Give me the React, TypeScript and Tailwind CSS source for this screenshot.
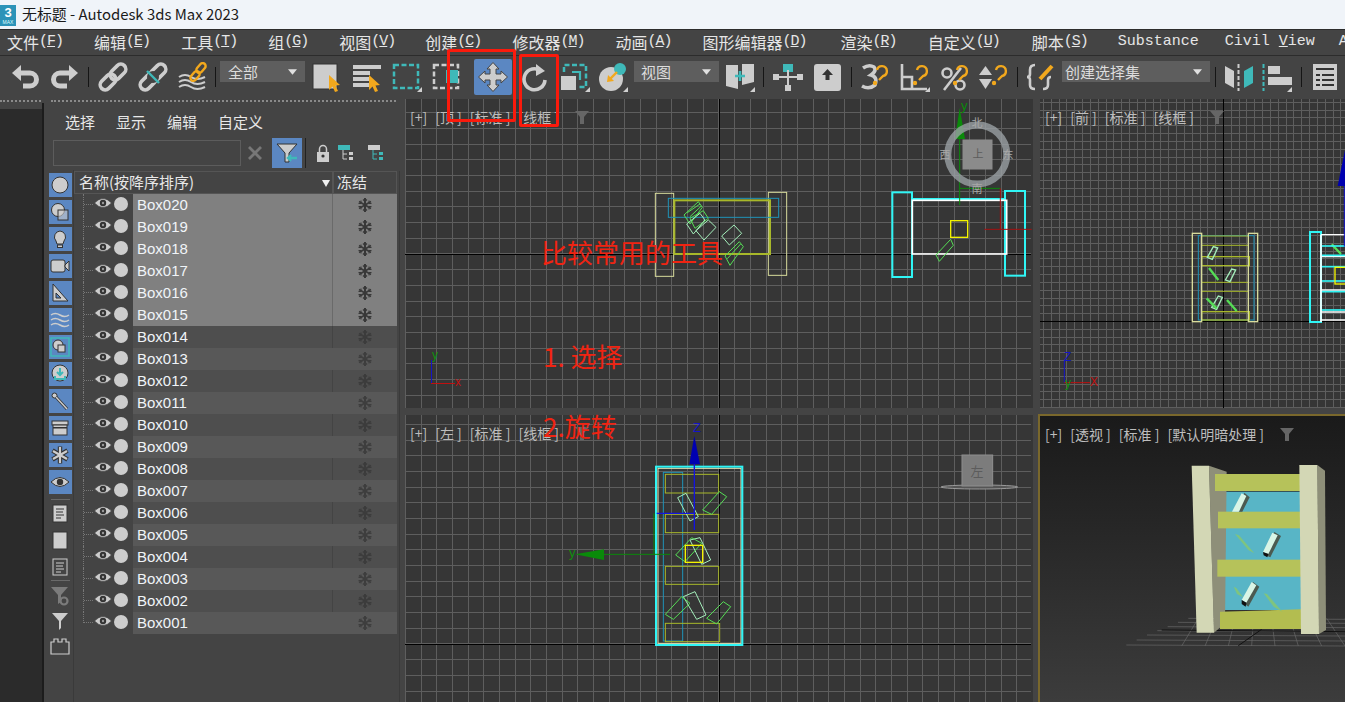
import type { ReactNode } from "react"

const G = "#cdcdcd"
const TEAL = "#3fb9b9"
const ORANGE = "#f2a81d"
const CJK = "font-['Noto_Sans_CJK_SC','Liberation_Sans',sans-serif]"

const menus = [
  ["文件", "F", ""],
  ["编辑", "E", ""],
  ["工具", "T", ""],
  ["组", "G", ""],
  ["视图", "V", ""],
  ["创建", "C", "-ml-px"],
  ["修改器", "M", ""],
  ["动画", "A", ""],
  ["图形编辑器", "D", ""],
  ["渲染", "R", "ml-[3px]"],
  ["自定义", "U", ""],
  ["脚本", "S", "ml-px"],
]

const boxes = Array.from({ length: 20 }, (_, i) => `Box${String(20 - i).padStart(3, "0")}`)

function Icon({ children, className = "" }: { children: ReactNode; className?: string }) {
  return (
    <svg viewBox="0 0 30 30" className={`w-[30px] h-[30px] shrink-0 ${className}`}>
      {children}
    </svg>
  )
}

function Sep({ className = "" }: { className?: string }) {
  return <div className={`w-px h-[20px] bg-[#151515] shrink-0 ${className}`} />
}

function Corner() {
  return <polygon points="30,25 30,30 25,30" fill="#d0d0d0" />
}

function Cursor({ x, y }: { x: number; y: number }) {
  return (
    <polygon
      transform={`translate(${x} ${y})`}
      points="0,0 11,10 6.5,10.5 9,16 6,17 3.5,11.5 0,15"
      fill={ORANGE}
    />
  )
}

function Dropdown({ label, className }: { label: string; className: string }) {
  return (
    <div className={`h-[21px] mb-[10px] bg-[#5e5e5e] flex items-center justify-between pr-2 shrink-0 ${className}`}>
      <span className={`text-[15px] leading-none text-[#dcdcdc] ${CJK}`}>{label}</span>
      <svg viewBox="0 0 10 6" className="w-[9px] h-[6px]">
        <polygon points="0,0 10,0 5,6" fill="#e0e0e0" />
      </svg>
    </div>
  )
}

function LinkGlyph({ broken = false }: { broken?: boolean }) {
  return (
    <>
      <g fill="none" stroke={G} strokeWidth="3.6">
        <rect x="-9" y="-5" width="18" height="10" rx="5" transform="translate(10 20) rotate(-45)" />
        <rect x="-9" y="-5" width="18" height="10" rx="5" transform="translate(20 10) rotate(-45)" />
      </g>
      {broken && (
        <>
          <circle cx="15" cy="15" r="6" fill="#444444" />
          <line x1="9" y1="9" x2="21" y2="21" stroke={TEAL} strokeWidth="2.4" />
        </>
      )}
    </>
  )
}

function QuestionHook() {
  return (
    <g fill="none" stroke={ORANGE} strokeWidth="2.4">
      <path d="M17 8 a5 5 0 1 1 6 6 l-4 4" />
      <circle cx="15" cy="21" r="1" fill={ORANGE} />
    </g>
  )
}

function Toolbar() {
  return (
    <div className="h-[42px] bg-[#444444] flex items-center pl-[10px] border-t border-[#2c2c2c] shrink-0">
      <Icon>
        <path d="M8 11 H20 a6.500 6.500 0 0 1 0 13 H13" fill="none" stroke={G} strokeWidth="5" />
        <polygon points="2,11 11,3 11,19" fill={G} />
      </Icon>
      <Icon className="ml-[10px]">
        <path d="M22 11 H10 a6.500 6.500 0 0 0 0 13 H17" fill="none" stroke={G} strokeWidth="5" />
        <polygon points="28,11 19,3 19,19" fill={G} />
      </Icon>
      <Sep className="ml-[8px]" />
      <Icon className="ml-[9px]">
        <LinkGlyph />
      </Icon>
      <Icon className="ml-[10px]">
        <LinkGlyph broken />
      </Icon>
      <Icon className="ml-[10px]">
        <g fill="none" stroke={G} strokeWidth="2">
          <path d="M1 15 q6 -4 12 0 t14 0" />
          <path d="M1 20 q6 -4 12 0 t14 0" />
          <path d="M1 25 q6 -4 12 0 t14 0" />
        </g>
        <g fill="none" stroke={ORANGE} strokeWidth="2.4">
          <rect x="-5.500" y="-3" width="11" height="6" rx="3" transform="translate(17 14) rotate(-50)" />
          <rect x="-5.500" y="-3" width="11" height="6" rx="3" transform="translate(23 6) rotate(-50)" />
        </g>
      </Icon>
      <Sep className="ml-[7px]" />
      <Dropdown label="全部" className="w-[85px] ml-[4px] pl-2" />
      <Icon className="ml-[7px]">
        <rect x="1" y="2" width="24" height="25" fill={G} stroke="#333333" />
        <Cursor x={17} y={13} />
      </Icon>
      <Icon className="ml-[10px]">
        <g fill={G}>
          <rect x="1" y="3" width="28" height="4" />
          <rect x="1" y="9" width="17" height="4" />
          <rect x="1" y="15" width="17" height="4" />
          <rect x="1" y="21" width="17" height="4" />
        </g>
        <Cursor x={17} y={13} />
      </Icon>
      <Icon className="ml-[10px]">
        <rect x="2" y="3" width="24" height="23" fill="none" stroke={TEAL} strokeWidth="2.500" strokeDasharray="5 2.500" />
        <polygon points="30,25 30,30 25,30" fill="#d0d0d0" />
      </Icon>
      <Icon className="ml-[10px]">
        <rect x="2" y="3" width="24" height="23" fill="none" stroke={G} strokeWidth="2.500" strokeDasharray="5 2.500" />
        <rect x="14" y="8" width="12" height="13" fill={TEAL} />
      </Icon>
      <div className="ml-[12px] w-[38px] h-[36px] rounded-[2px] bg-[#5b87c2] flex items-center justify-center shrink-0">
        <Icon>
          <g fill={G} stroke="#444444" strokeWidth="1">
            <path d="M15 0.500 L21 7 H18 V12 H23 V9 L29.500 15 L23 21 V18 H18 V23 H21 L15 29.500 L9 23 H12 V18 H7 V21 L0.500 15 L7 9 V12 H12 V7 H9 Z" />
          </g>
        </Icon>
      </div>
      <Icon className="ml-[8px]">
        <path d="M21 9 A10.500 10.500 0 1 0 25 18" fill="none" stroke={G} strokeWidth="3.600" />
        <polygon points="16,2 25,9 16,14" fill={G} />
      </Icon>
      <Icon className="ml-[10px]">
        <rect x="1" y="14" width="15" height="14" fill={G} />
        <path d="M4 10 V3 H26 V25 H18" fill="none" stroke={TEAL} strokeWidth="2.500" strokeDasharray="5 2.500" />
        <path d="M12 10 H20 V18" fill="none" stroke={TEAL} strokeWidth="2.200" />
        <Corner />
      </Icon>
      <Icon className="ml-[8px]">
        <circle cx="13" cy="17" r="12" fill={G} />
        <circle cx="22" cy="7" r="6" fill={TEAL} />
        <line x1="19" y1="10" x2="11" y2="18" stroke={ORANGE} strokeWidth="2.400" />
        <polygon points="9,20 10,13 16,19" fill={ORANGE} />
        <Corner />
      </Icon>
      <Dropdown label="视图" className="w-[85px] ml-[6px] pl-[7px]" />
      <Icon className="ml-[6px]">
        <polygon points="1,3 13,3 13,27 1,24" fill={G} />
        <polygon points="17,2 29,2 29,20 17,23" fill={G} />
        <path d="M15 9 V19 M10 14 H20" stroke={TEAL} strokeWidth="2.600" />
        <Corner />
      </Icon>
      <Sep className="ml-[8px]" />
      <Icon className="ml-[9px]">
        <rect x="14" y="14" width="2" height="14" fill={G} />
        <rect x="4" y="14" width="22" height="2" fill={G} />
        <rect x="10" y="2" width="10" height="8" fill={TEAL} />
        <rect x="14" y="8" width="2" height="8" fill={G} />
        <rect x="0" y="12" width="6" height="6" fill={G} />
        <rect x="24" y="12" width="6" height="6" fill={G} />
        <rect x="12" y="23" width="6" height="6" fill={G} />
      </Icon>
      <Icon className="ml-[10px]">
        <rect x="1" y="2" width="27" height="27" rx="3" fill={G} />
        <polygon points="14.500,7 20,13 16.500,13 16.500,18 12.500,18 12.500,13 9,13" fill="#333333" />
      </Icon>
      <Sep className="ml-[8px]" />
      <Icon className="ml-[8px]">
        <path d="M3 6 Q9 2 14 5 Q17 9 11 13 Q18 15 15 23 Q9 28 2 24" fill="none" stroke={G} strokeWidth="3.600" />
        <QuestionHook />
      </Icon>
      <Icon className="ml-[10px]">
        <path d="M2 2 V27 H27 M2 27 V15 H12 V27" fill="none" stroke={G} strokeWidth="2.600" />
        <QuestionHook />
        <Corner />
      </Icon>
      <Icon className="ml-[10px]">
        <line x1="4" y1="28" x2="21" y2="6" stroke={G} strokeWidth="2.600" />
        <circle cx="7" cy="11" r="4.500" fill="none" stroke={G} strokeWidth="2.600" />
        <circle cx="20" cy="23" r="4.500" fill="none" stroke={G} strokeWidth="2.600" />
        <QuestionHook />
      </Icon>
      <Icon className="ml-[9px]">
        <polygon points="0,13 13,13 6.500,4" fill={G} />
        <polygon points="0,17 13,17 6.500,27" fill={G} />
        <QuestionHook />
      </Icon>
      <Sep className="ml-[8px]" />
      <Icon className="ml-[8px]">
        <path d="M9 3 Q4 3 4 8 V12 Q4 15 1 15 Q4 15 4 18 V23 Q4 27 9 27" fill="none" stroke={G} strokeWidth="2.600" />
        <path d="M17 27 Q22 27 22 23 V18 Q22 15 25 15" fill="none" stroke={G} strokeWidth="2.600" />
        <line x1="14" y1="17" x2="26" y2="4" stroke={ORANGE} strokeWidth="4" />
      </Icon>
      <Dropdown label="创建选择集" className="w-[148px] ml-[6px] pl-[3px]" />
      <Sep className="ml-[5px]" />
      <Icon className="ml-[8px]">
        <polygon points="1,4 10,9 10,26 1,21" fill={G} />
        <line x1="14.500" y1="2" x2="14.500" y2="29" stroke={G} strokeWidth="2" strokeDasharray="4 2" />
        <polygon points="29,4 20,9 20,26 29,21" fill={TEAL} />
      </Icon>
      <Icon className="ml-[8px]">
        <line x1="1.500" y1="2" x2="1.500" y2="29" stroke={TEAL} strokeWidth="2" strokeDasharray="4 2" />
        <rect x="6" y="4" width="12" height="8" fill={G} />
        <rect x="6" y="15" width="24" height="8" fill={G} />
        <Corner />
      </Icon>
      <Sep className="ml-[9px]" />
      <Icon className="ml-[8px]">
        <rect x="3" y="2" width="24" height="26" fill={G} />
        <g fill="#333333">
          <rect x="6" y="6" width="18" height="2" />
          <rect x="6" y="12" width="4" height="2" />
          <rect x="12" y="12" width="12" height="2" />
          <rect x="6" y="17" width="4" height="2" />
          <rect x="12" y="17" width="12" height="2" />
          <rect x="6" y="22" width="4" height="2" />
          <rect x="12" y="22" width="12" height="2" />
        </g>
      </Icon>
    </div>
  )
}

function SideIcon({ children }: { children: ReactNode }) {
  return (
    <div className="w-[23px] h-[24px] bg-[#5b87c2] flex items-center justify-center">
      <svg viewBox="0 0 20 20" className="w-[20px] h-[20px]">
        {children}
      </svg>
    </div>
  )
}

function PlainIcon({ children }: { children: ReactNode }) {
  return (
    <svg viewBox="0 0 20 20" className="w-[20px] h-[20px]">
      {children}
    </svg>
  )
}

const ic = { fill: G, stroke: "#333333", strokeWidth: 1 }

function SideColumn() {
  return (
    <div className="w-[30px] shrink-0 border-r border-[#3a3a3a] flex flex-col items-center pt-[3px] pl-[3px]">
      <div className="flex flex-col gap-[3px] w-[23px]">
        <SideIcon><circle cx="10" cy="10" r="8" {...ic} /></SideIcon>
        <SideIcon>
          <circle cx="8" cy="8" r="6.500" {...ic} />
          <rect x="8" y="8" width="10" height="10" fill={G} fillOpacity="0.6" stroke="#333333" />
        </SideIcon>
        <SideIcon>
          <path d="M10 2 a6 6 0 0 1 4 10 l-1 3 H7 l-1 -3 a6 6 0 0 1 4 -10 Z" {...ic} />
          <rect x="7.500" y="16" width="5" height="2.500" {...ic} />
        </SideIcon>
        <SideIcon>
          <rect x="1" y="4" width="14" height="12" rx="2" {...ic} />
          <polygon points="15,9 19,5 19,15 15,11" {...ic} />
        </SideIcon>
        <SideIcon>
          <polygon points="3,1 18,18 3,18" {...ic} />
          <polygon points="6,10 11,15 6,15" fill="#5b87c2" stroke="#333333" />
        </SideIcon>
        <SideIcon>
          <g fill="none" stroke={G} strokeWidth="1.500">
            <path d="M1 5 q4 -3 9 0 t9 0" />
            <path d="M1 10 q4 -3 9 0 t9 0" />
            <path d="M1 15 q4 -3 9 0 t9 0" />
          </g>
        </SideIcon>
        <SideIcon>
          <rect x="1" y="1" width="18" height="18" fill="none" stroke={TEAL} strokeWidth="1.500" />
          <circle cx="8" cy="8" r="5" {...ic} />
          <rect x="8" y="8" width="7" height="7" {...ic} />
        </SideIcon>
        <SideIcon>
          <circle cx="10" cy="9" r="8" {...ic} />
          <path d="M10 4 V10 M7 8 L10 11 L13 8" fill="none" stroke={TEAL} strokeWidth="2" />
          <path d="M5 12 V15 H15 V12" fill="none" stroke={TEAL} strokeWidth="2" />
        </SideIcon>
        <SideIcon>
          <circle cx="4.500" cy="4.500" r="2.500" {...ic} />
          <line x1="6" y1="6" x2="17" y2="18" stroke="#333333" strokeWidth="3" />
          <line x1="6" y1="6" x2="17" y2="18" stroke={G} strokeWidth="1.500" />
        </SideIcon>
        <SideIcon>
          <rect x="2" y="3" width="16" height="4" {...ic} />
          <rect x="3" y="7" width="14" height="10" {...ic} />
          <rect x="3" y="9" width="14" height="1.500" fill="#333333" />
        </SideIcon>
        <SideIcon>
          <g stroke="#333333" strokeWidth="4.400">
            <line x1="10" y1="1.500" x2="10" y2="18.500" />
            <line x1="2.500" y1="5.500" x2="17.500" y2="14.500" />
            <line x1="2.500" y1="14.500" x2="17.500" y2="5.500" />
          </g>
          <g stroke={G} strokeWidth="2.200">
            <line x1="10" y1="2" x2="10" y2="18" />
            <line x1="3" y1="6" x2="17" y2="14" />
            <line x1="3" y1="14" x2="17" y2="6" />
          </g>
        </SideIcon>
        <SideIcon>
          <path d="M1 10 Q10 1 19 10 Q10 19 1 10 Z" {...ic} />
          <circle cx="10" cy="10" r="3.200" fill="#333333" />
        </SideIcon>
      </div>
      <div className="w-[19px] h-px bg-[#6a6a6a] mt-[5px]" />
      <div className="flex flex-col items-center gap-[7px] mt-[4px]">
        <PlainIcon>
          <rect x="3" y="1" width="14" height="17" {...ic} />
          <path d="M6 5 H14 M6 8 H13 M6 11 H14 M6 14 H11" stroke="#333333" />
        </PlainIcon>
        <PlainIcon><rect x="3" y="1" width="14" height="17" {...ic} /></PlainIcon>
        <PlainIcon>
          <rect x="3" y="1" width="14" height="16" fill="#444444" stroke={G} />
          <path d="M6 5 H14 M6 8 H13 M6 11 H14 M6 14 H11" stroke={G} />
        </PlainIcon>
      </div>
      <div className="w-[19px] h-px bg-[#6a6a6a] mt-[2px]" />
      <div className="flex flex-col items-center gap-[5px] mt-[5px]">
        <PlainIcon>
          <polygon points="1,1 18,1 11,9 11,16 8,18 8,9" fill="#7b7b7b" />
          <circle cx="14" cy="15" r="3.500" fill="none" stroke="#7b7b7b" strokeWidth="2.200" />
        </PlainIcon>
        <PlainIcon>
          <polygon points="2,2 18,2 11,10 11,17 9,19 9,10" fill={G} />
        </PlainIcon>
        <PlainIcon>
          <path d="M1 6 H4 V3 H8 V6 H12 V3 H16 V6 H19 V18 H1 Z" fill="none" stroke={G} strokeWidth="1.200" />
        </PlainIcon>
      </div>
    </div>
  )
}

function FreezeFlake({ dim }: { dim: boolean }) {
  return (
    <svg viewBox="0 0 14 14" className={`w-[14px] h-[14px] ${dim ? "opacity-80" : ""}`}>
      <g stroke="#383838" fill="none">
        <line x1="7" y1="0" x2="7" y2="14" strokeWidth="2" />
        <line x1="1" y1="3.500" x2="13" y2="10.500" strokeWidth="1.500" />
        <line x1="1" y1="10.500" x2="13" y2="3.500" strokeWidth="1.500" />
        <path d="M5 1.500 L7 3.500 L9 1.500 M5 12.500 L7 10.500 L9 12.500" strokeWidth="1.200" />
        <path d="M0.500 5.500 H3 V2.500 M13.500 5.500 H11 V2.500 M0.500 8.500 H3 V11.500 M13.500 8.500 H11 V11.500" strokeWidth="1" />
      </g>
    </svg>
  )
}

function BoxRow({ name, index }: { name: string; index: number }) {
  const selected = index < 6
  const odd = index % 2 === 1
  const bg = selected ? "bg-[#808080]" : odd ? "bg-[#585858]" : "bg-[#4e4e4e]"
  const last = index === boxes.length - 1
  return (
    <div className="flex h-[22px]">
      <div className="w-[59px] flex shrink-0 pl-[9px]">
        <div className={`w-[10px] border-l border-dotted border-[#777777] ${last ? "h-[11px]" : "h-full"}`}>
          <div className="h-[11px] border-b border-dotted border-[#777777]" />
        </div>
        <svg viewBox="0 0 18 12" className="w-[18px] h-[12px] ml-px mt-[3px]">
          <path d="M0.500 6 Q9 -3 17.500 6 Q9 15 0.500 6 Z" fill={G} stroke="#333333" strokeWidth="0.600" />
          <circle cx="9" cy="6" r="3.200" fill="#333333" />
          <circle cx="9" cy="6" r="1.200" fill="#999999" />
        </svg>
        <div className="w-[14px] h-[14px] rounded-full bg-[#cdcdcd] ml-[2px] mt-[3px]" />
      </div>
      <div className={`flex-1 flex ${bg}`}>
        <div className={`flex-1 flex items-center pl-[4px] text-[15px] text-[#f0f4f8] font-['Liberation_Sans',sans-serif] ${!odd && !selected ? "border-r border-[#444444]" : ""} ${selected ? "border-r border-[#6a6a6a]" : ""}`}>
          {name}
        </div>
        <div className="w-[64px] flex items-center justify-center">
          <FreezeFlake dim={!selected} />
        </div>
      </div>
    </div>
  )
}

function Explorer() {
  return (
    <div className="flex-1 flex flex-col bg-[#444444] border-l-2 border-[#1c1c1c]">
      <div className={`flex gap-[21px] pl-[21px] mt-[9px] text-[15px] leading-[20px] text-[#e8e8e8] ${CJK}`}>
        <span>选择</span>
        <span>显示</span>
        <span>编辑</span>
        <span>自定义</span>
      </div>
      <div className="flex items-center pl-[9px] mt-[6px] h-[30px]">
        <div className="w-[188px] h-[26px] border border-[#5c5c5c]" />
        <svg viewBox="0 0 14 14" className="w-[14px] h-[14px] ml-[7px]">
          <path d="M1 1 L13 13 M13 1 L1 13" stroke="#777777" strokeWidth="2.800" />
        </svg>
        <div className="w-[30px] h-[30px] bg-[#5b87c2] ml-[10px] flex items-center justify-center">
          <svg viewBox="0 0 24 24" className="w-[24px] h-[24px]">
            <polygon points="2,3 22,3 14,12 14,21 10,21 10,12" fill={G} stroke="#333333" />
            <path d="M22 17 H13 M16 14 L13 17 L16 20" fill="none" stroke={TEAL} strokeWidth="2.400" />
          </svg>
        </div>
        <div className="w-px h-[30px] bg-[#222222] ml-[3px]" />
        <svg viewBox="0 0 14 20" className="w-[14px] h-[20px] ml-[10px]">
          <path d="M3.500 9 V6 a3.500 3.500 0 0 1 7 0 V9" fill="none" stroke={G} strokeWidth="1.500" />
          <rect x="1" y="9" width="12" height="10" fill={G} />
          <circle cx="7" cy="13" r="1.600" fill="#333333" />
        </svg>
        <svg viewBox="0 0 18 18" className="w-[18px] h-[18px] ml-[8px]">
          <rect x="0" y="1" width="12" height="5" fill={TEAL} />
          <path d="M5 6 V15 H9 M5 10 H9" fill="none" stroke={G} />
          <rect x="11" y="8" width="4" height="3" fill={G} />
          <rect x="11" y="13" width="4" height="3" fill={G} />
        </svg>
        <svg viewBox="0 0 18 18" className="w-[18px] h-[18px] ml-[12px]">
          <rect x="0" y="1" width="12" height="5" fill={G} />
          <path d="M5 6 V15 H9 M5 10 H9" fill="none" stroke={TEAL} />
          <rect x="11" y="8" width="4" height="3" fill={TEAL} />
          <rect x="11" y="13" width="4" height="3" fill={TEAL} />
        </svg>
      </div>
      <div className="flex-1 flex mt-[2px] min-h-0">
        <SideColumn />
        <div className="flex-1 flex flex-col pr-[2px] mt-[1px] border-r border-[#3a3a3a]">
          <div className={`h-[23px] flex text-[15px] text-[#e8e8e8] ${CJK}`}>
            <div className="flex-1 border border-[#555555] flex items-center justify-between pl-[4px] pr-[2px]">
              <span>名称(按降序排序)</span>
              <svg viewBox="0 0 8 8" className="w-[8px] h-[8px]">
                <polygon points="0,1 8,1 4,8" fill="#f0f0f0" />
              </svg>
            </div>
            <div className="w-[64px] border border-[#555555] flex items-center pl-[3px]">冻结</div>
          </div>
          {boxes.map((b, i) => (
            <BoxRow key={b} name={b} index={i} />
          ))}
        </div>
      </div>
    </div>
  )
}

function ViewLabel({ items }: { items: string[] }) {
  return (
    <div className={`absolute top-[10px] left-[5px] flex items-center gap-[8px] text-[14px] leading-[16px] text-[#bdbdbd] ${CJK}`}>
      {items.map((t) => (
        <span key={t}>{t}</span>
      ))}
      <svg viewBox="0 0 16 16" className="w-[16px] h-[16px] ml-[7px]">
        <polygon points="1,2 15,2 10,8 10,15 6,15 6,8" fill="#666666" />
      </svg>
    </div>
  )
}

function GridLines({
  x0, y0, w, h, pitch, ax, ay,
}: { x0: number; y0: number; w: number; h: number; pitch: number; ax: number; ay: number }) {
  const xs: number[] = []
  const ys: number[] = []
  for (let v = ax - Math.floor((ax - x0) / pitch) * pitch; v < x0 + w; v += pitch) xs.push(Math.round(v) + 0.5)
  for (let v = ay - Math.floor((ay - y0) / pitch) * pitch; v < y0 + h; v += pitch) ys.push(Math.round(v) + 0.5)
  return (
    <g shapeRendering="crispEdges">
      {xs.map((v) => <line key={`x${v}`} x1={v} x2={v} y1={y0} y2={y0 + h} stroke="#5e5e5e" />)}
      {ys.map((v) => <line key={`y${v}`} y1={v} y2={v} x1={x0} x2={x0 + w} stroke="#5e5e5e" />)}
      <line x1={Math.round(ax) + 0.5} x2={Math.round(ax) + 0.5} y1={y0} y2={y0 + h} stroke="#000000" />
      <line y1={Math.round(ay) + 0.5} y2={Math.round(ay) + 0.5} x1={x0} x2={x0 + w} stroke="#000000" />
    </g>
  )
}

function TopView() {
  return (
    <svg viewBox="405 99 628 309" className="w-full h-full block">
      <GridLines x0={405} y0={99} w={626} h={309} pitch={15.67} ax={718.5} ay={253.5} />
      <polygon points="959.700,108 955,139 965,139" fill="#0a8a0a" />
      <g transform="translate(640 100) scale(0.33333)" fill="none" strokeWidth="3">
        <rect x="46" y="280" width="55" height="249" stroke="#d8dc9c" />
        <rect x="385" y="277" width="55" height="249" stroke="#d8dc9c" />
        <rect x="103" y="301" width="287" height="161" stroke="#a8b82a" strokeWidth="6" />
        <rect x="85" y="295" width="331" height="57" stroke="#1f93b8" />
        <g stroke="#55dd55">
          <path d="M132 345 L175 305 L187 322 L150 372 Z" />
          <path d="M142 338 L180 312 M150 350 L184 318" />
          <path d="M255 468 L298 425 L310 440 L270 496 Z" />
          <path d="M262 476 L302 432" />
          <path d="M150 355 L190 332 L205 355 L165 385 Z" />
        </g>
        <g stroke="#a5f0bc">
          <path d="M140 372 L180 340 L195 360 L160 402 Z" />
          <path d="M168 392 L205 360 L228 382 L192 420 Z" />
          <path d="M245 408 L282 375 L305 400 L268 435 Z" />
        </g>
        <rect x="757" y="277" width="59" height="254" stroke="#2ff5f5" strokeWidth="6" />
        <rect x="1095" y="273" width="60" height="254" stroke="#2ff5f5" strokeWidth="6" />
        <line x1="816" y1="297" x2="1095" y2="297" stroke="#2ff5f5" strokeWidth="6" />
        <rect x="817" y="301" width="283" height="161" stroke="#ffffff" strokeWidth="5" />
        <rect x="932" y="362" width="51" height="50" stroke="#f4f400" strokeWidth="4" />
        <path d="M888 465 L932 418 L940 436 L898 484 Z" stroke="#55dd55" />
        <line x1="959" y1="115" x2="959" y2="315" stroke="#0a8a0a" />
        <line x1="959" y1="265" x2="1081" y2="265" stroke="#0a8a0a" />
        <line x1="1081" y1="265" x2="1081" y2="388" stroke="#a51010" />
        <line x1="1033" y1="388" x2="1175" y2="388" stroke="#a51010" />
      </g>
      <text x="961" y="110" fontSize="13" fill="#0a8a0a" fontFamily="Liberation Sans">y</text>
      <circle cx="977.300" cy="154.500" r="29.500" fill="none" stroke="#9aa0a4" strokeOpacity="0.8" strokeWidth="7" />
      <rect x="962.500" y="139.500" width="30" height="30" fill="#8b8b8b" />
      <g fontFamily="Noto Sans CJK SC" fontSize="11" fill="#a8a8a8" textAnchor="middle">
        <text x="978" y="158" fill="#5c5c5c">上</text>
        <text x="977" y="127">北</text>
        <text x="977" y="193">南</text>
        <text x="945" y="159">西</text>
        <text x="1008" y="159">东</text>
      </g>
      <g strokeWidth="1" shapeRendering="crispEdges">
        <line x1="431.500" y1="360" x2="431.500" y2="384" stroke="#1414c8" />
        <line x1="431" y1="383.500" x2="455" y2="383.500" stroke="#c01010" />
      </g>
      <g fontFamily="Liberation Sans" fontSize="12">
        <text x="432" y="359" fill="#0f8f0f">y</text>
        <text x="455" y="386" fill="#c01010">x</text>
      </g>
    </svg>
  )
}

function FrontView() {
  return (
    <svg viewBox="1040 99 305 309" className="w-full h-full block">
      <GridLines x0={1040} y0={99} w={305} h={309} pitch={7.83} ax={1223} ay={321} />
      <g transform="translate(1035 100) scale(0.33333)" fill="none" strokeWidth="3">
        <rect x="490" y="407" width="167" height="253" stroke="#1f93b8" />
        <path d="M500 408 H640 M500 436 H640 M500 547 H640 M500 574 H640" stroke="#a8b82a" />
        <rect x="500" y="470" width="143" height="27" stroke="#a8b82a" strokeWidth="4" />
        <rect x="500" y="635" width="143" height="25" stroke="#a8b82a" strokeWidth="4" />
        <rect x="472" y="400" width="28" height="265" stroke="#d8dc9c" strokeWidth="4" />
        <rect x="640" y="400" width="28" height="265" stroke="#d8dc9c" strokeWidth="4" />
        <g stroke="#a5f0bc" strokeWidth="4">
          <path d="M517 472 L535 440 L548 444 L532 478 Z" />
          <path d="M571 540 L590 507 L602 510 L585 545 Z" />
          <path d="M530 622 L550 588 L562 592 L545 628 Z" />
        </g>
        <g stroke="#55dd55" strokeWidth="7">
          <line x1="522" y1="504" x2="550" y2="540" />
          <line x1="515" y1="595" x2="545" y2="625" />
          <line x1="576" y1="600" x2="605" y2="633" />
          <line x1="890" y1="433" x2="918" y2="462" />
        </g>
        <rect x="825" y="396" width="33" height="270" stroke="#2ff5f5" strokeWidth="6" />
        <path d="M858 404 H930 M858 636 H930 M858 660 H930 M858 470 H930 M858 570 H930" stroke="#ffffff" strokeWidth="4" />
        <rect x="858" y="438" width="80" height="28" stroke="#2ff5f5" strokeWidth="5" />
        <rect x="858" y="500" width="80" height="43" stroke="#2ff5f5" strokeWidth="5" />
        <rect x="858" y="575" width="80" height="55" stroke="#2ff5f5" strokeWidth="5" />
        <line x1="858" y1="404" x2="858" y2="666" stroke="#ffffff" strokeWidth="5" />
        <rect x="900" y="502" width="40" height="50" stroke="#f4f400" strokeWidth="4" />
        <line x1="928" y1="258" x2="928" y2="440" stroke="#1414c8" />
        <polygon points="930,150 908,258 935,258" fill="#0000b0" />
        <line x1="88" y1="780" x2="88" y2="848" stroke="#1414c8" />
        <line x1="88" y1="848" x2="165" y2="848" stroke="#c01010" />
      </g>
      <g fontFamily="Liberation Sans" fontSize="12">
        <text x="1064" y="361" fill="#1414c8">Z</text>
        <text x="1065" y="387" fill="#0f8f0f">y</text>
        <text x="1090" y="386" fill="#c01010">X</text>
      </g>
    </svg>
  )
}

function LeftView() {
  return (
    <svg viewBox="405 415 628 287" className="w-full h-full block">
      <GridLines x0={405} y0={415} w={626} h={287} pitch={15.67} ax={718.5} ay={643.5} />
      <g transform="translate(560 415) scale(0.33333)" fill="none" strokeWidth="3">
        <rect x="310" y="172" width="58" height="506" stroke="#1f93b8" />
        <g stroke="#a8b82a">
          <rect x="316" y="178" width="160" height="56" />
          <rect x="316" y="298" width="160" height="55" />
          <rect x="316" y="454" width="160" height="54" />
          <rect x="316" y="625" width="163" height="55" />
        </g>
        <g stroke="#a5f0bc">
          <path d="M353 248 L378 235 L415 305 L390 318 Z" />
          <path d="M390 375 L420 368 L452 435 L425 448 Z" />
          <path d="M370 545 L405 530 L438 600 L410 613 Z" />
        </g>
        <g stroke="#55dd55">
          <path d="M428 285 L478 230 L500 245 L455 298 Z" />
          <path d="M347 420 L395 368 L425 385 L375 440 Z" />
          <path d="M316 598 L365 545 L390 565 L340 613 Z" />
          <path d="M440 610 L490 560 L512 575 L470 627 Z" />
        </g>
        <rect x="294" y="160" width="249" height="525" stroke="#e6e8b8" strokeWidth="3" />
        <rect x="288" y="155" width="259" height="535" stroke="#2ff5f5" strokeWidth="6" />
        <rect x="376" y="391" width="52" height="51" stroke="#f4f400" strokeWidth="4" />
        <line x1="403" y1="140" x2="403" y2="345" stroke="#1414e0" strokeWidth="4" />
        <line x1="290" y1="295" x2="403" y2="295" stroke="#1414e0" strokeWidth="4" />
        <line x1="130" y1="418" x2="330" y2="418" stroke="#0a8a0a" />
        <line x1="282" y1="295" x2="282" y2="418" stroke="#0a8a0a" />
        <polygon points="403,62 388,148 420,148" fill="#0000b0" />
        <polygon points="45,418 132,403 132,435" fill="#0a8a0a" />
        <ellipse cx="1258" cy="216" rx="115" ry="6" fill="#555555" stroke="#9a9a9a" />
        <rect x="1206" y="120" width="92" height="93" fill="#7c7c7c" stroke="#8f8f8f" />
      </g>
      <g fontFamily="Liberation Sans" fontSize="13">
        <text x="693" y="432" fill="#1414c8">Z</text>
        <text x="569" y="557" fill="#0f8f0f">y</text>
      </g>
      <text x="977" y="476" fontFamily="Noto Sans CJK SC" fontSize="13" fill="#5c5c5c" textAnchor="middle">左</text>
    </svg>
  )
}

function PerspView() {
  return (
    <svg viewBox="15 18 915 858" preserveAspectRatio="xMinYMin meet" className="w-full h-full block">
      <g stroke="#6a6a6a" strokeWidth="2">
        {[625, 637, 650, 662, 675, 690, 705].map((y, i) => (
          <line key={y} x1={460 - i * 31} y1={y} x2="930" y2={y + 3} />
        ))}
        {[-2, -1, 0, 1, 2, 3, 4, 5, 6, 7, 8].map((k) => (
          <line key={k} x1={600 + k * 55} y1="625" x2={600 + k * 70 - 20} y2="708" />
        ))}
      </g>
      <line x1="610" y1="707" x2="680" y2="658" stroke="#111111" strokeWidth="3" />
      <line x1="380" y1="660" x2="930" y2="665" stroke="#111111" strokeWidth="3" />
      <rect x="562" y="245" width="236" height="355" fill="#58b5c6" />
      <polygon points="522,167 575,185 570,640 537,668" fill="#8e8f79" />
      <rect x="540" y="192" width="255" height="51" fill="#b6c25a" />
      <rect x="549" y="305" width="247" height="50" fill="#b6c25a" />
      <rect x="547" y="449" width="251" height="51" fill="#b6c25a" />
      <polygon points="555,605 798,598 798,657 555,657" fill="#b3bd50" />
      <polygon points="470,167 522,167 537,668 485,668" fill="#d3d7b5" />
      <polygon points="847,165 870,182 873,660 852,672" fill="#8e8f79" />
      <polygon points="793,165 847,165 852,672 798,672" fill="#d3d7b5" />
      <polygon points="628,248 644,262 622,305 610,305" fill="#4b5a50" />
      <polygon points="620,250 634,258 612,305 591,305" fill="#d9f5e6" />
      <polygon points="718,366 738,378 706,442 692,436" fill="#4b5a50" />
      <polygon points="712,368 728,376 700,432 684,426" fill="#d9f5e6" />
      <polygon points="684,426 700,432 697,442 686,436" fill="#111111" />
      <polygon points="654,516 673,530 640,590 630,582" fill="#4b5a50" />
      <polygon points="650,516 664,526 634,578 620,570" fill="#d9f5e6" />
      <polygon points="620,570 634,578 632,590 620,582" fill="#111111" />
      <polygon points="600,372 612,376 658,430 640,420" fill="#7fc47f" />
      <polygon points="596,530 604,534 624,562 606,552" fill="#7fc47f" />
      <polygon points="686,550 696,552 742,605 716,590" fill="#7fc47f" />
    </svg>
  )
}

export default function App() {
  return (
    <div className={`relative w-[1345px] h-[702px] overflow-hidden bg-[#444444] flex flex-col ${CJK}`}>
      {/* title bar */}
      <div className="h-[29px] bg-[#f0f4f9] flex items-center shrink-0">
        <div className="w-[16px] h-[21px] ml-0 mt-[1px] bg-[#2c93b8] flex flex-col items-center justify-start">
          <span className="text-[13px] leading-[15px] font-bold text-white font-['Liberation_Sans',sans-serif]">3</span>
          <span className="text-[5px] leading-[5px] text-[#ddffff] font-['Liberation_Sans',sans-serif]">MAX</span>
        </div>
        <span className="ml-[6px] text-[14.9px] text-[#1a1a1a] font-['Noto_Sans_CJK_SC','Noto_Sans',sans-serif]">
          无标题 - Autodesk 3ds Max 2023
        </span>
      </div>

      {/* menu */}
      <div className="h-[26px] pb-[2px] bg-[#444444] border-t border-[#2c2c2c] flex items-center pl-[7px] gap-[31px] text-[#e6e6e6] text-[16px] leading-none shrink-0 whitespace-nowrap">
        {menus.map(([label, key, extra]) => (
          <span key={key} className={`flex items-center ${extra}`}>
            {label}
            <span className="font-['Liberation_Mono',monospace] text-[15px] tracking-[-1px]">
              (<span className="underline">{key}</span>)
            </span>
          </span>
        ))}
        <span className="font-['Liberation_Mono',monospace] text-[15px] -ml-[1px]">Substance</span>
        <span className="font-['Liberation_Mono',monospace] text-[15px] -ml-[5px]">
          Civil <span className="underline">V</span>iew
        </span>
        <span className="font-['Liberation_Mono',monospace] text-[15px] -ml-[7px]">A</span>
      </div>

      <Toolbar />

      <div className="flex-1 flex min-h-0">
        {/* left dock */}
        <div className="w-[405px] shrink-0 flex flex-col bg-[#444444]">
          <div className="h-[12px] shrink-0 flex items-start pt-[3px]">
            <div className="w-[41px] border-t-2 border-dotted border-[#8a8a8a]" />
            <div className="w-[345px] ml-[10px] border-t-2 border-dotted border-[#8a8a8a]" />
          </div>
          <div className="flex-1 flex min-h-0 -mt-[6px] pr-[5px]">
            <div className="w-[42px] shrink-0 bg-[#2b2b2b] mt-[6px]" />
            <Explorer />
          </div>
        </div>

        {/* viewports */}
        <div className="flex-1 grid grid-cols-[628px_305px] grid-rows-[309px_287px] gap-[7px] pt-[2px]">
          <div className="relative overflow-hidden bg-[#363636]">
            <TopView />
            <ViewLabel items={["[+]", "[顶 ]", "[标准 ]", "[线框 ]"]} />
          </div>
          <div className="relative overflow-hidden bg-[#363636]">
            <FrontView />
            <ViewLabel items={["[+]", "[前 ]", "[标准 ]", "[线框 ]"]} />
          </div>
          <div className="relative overflow-hidden bg-[#363636]">
            <LeftView />
            <ViewLabel items={["[+]", "[左 ]", "[标准 ]", "[线框 ]"]} />
          </div>
          <div className="relative overflow-hidden bg-gradient-to-b from-[#1a1a1a] to-[#3c3c3c] border-l-2 border-t-2 border-[#7a682c] -ml-[2px] -mt-[1px]">
            <PerspView />
            <ViewLabel items={["[+]", "[透视 ]", "[标准 ]", "[默认明暗处理 ]"]} />
          </div>
        </div>
      </div>

      {/* red annotations on top of the screenshot */}
      <div className="absolute left-[447px] top-[49px] w-[69px] h-[73px] border-[3px] border-[#fa1a0c] rounded-[2px]" />
      <div className="absolute left-[519px] top-[54px] w-[40px] h-[73px] border-[3px] border-[#fa1a0c] rounded-[2px]" />
      <div className="absolute left-[541px] top-[234px] text-[26px] leading-[36px] text-[#f02412] whitespace-nowrap">比较常用的工具</div>
      <div className="absolute left-[543px] top-[338px] text-[26px] leading-[36px] text-[#f02412] whitespace-nowrap">1. 选择</div>
      <div className="absolute left-[543px] top-[408px] text-[26px] leading-[36px] text-[#f02412] whitespace-nowrap">2.旋转</div>
    </div>
  )
}
